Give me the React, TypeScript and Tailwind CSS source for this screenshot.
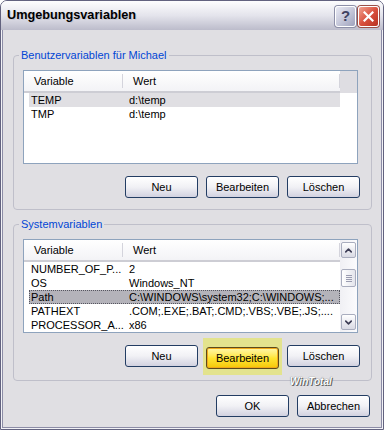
import { ChevronUp, ChevronDown } from 'lucide-react';

type Row = { name: string; value: string; selected?: boolean; focused?: boolean };

const userVars: Row[] = [
  { name: 'TEMP', value: 'd:\\temp', selected: true },
  { name: 'TMP', value: 'd:\\temp' },
];

const sysVars: Row[] = [
  { name: 'NUMBER_OF_P...', value: '2' },
  { name: 'OS', value: 'Windows_NT' },
  { name: 'Path', value: 'C:\\WINDOWS\\system32;C:\\WINDOWS;...', focused: true },
  { name: 'PATHEXT', value: '.COM;.EXE;.BAT;.CMD;.VBS;.VBE;.JS;....' },
  { name: 'PROCESSOR_A...', value: 'x86' },
];

function XpButton({ label, hot }: { label: string; hot?: boolean }) {
  if (hot) {
    return (
      <div className="relative">
        {/* yellow marker drawn over the screenshot */}
        <div className="absolute -left-[3px] -right-[3px] -top-[7px] -bottom-[6px] bg-[#e3e38e]" />
        <button className="relative w-[73px] h-[22px] rounded-[3px] border border-[#5b4a1c] bg-gradient-to-b from-[#fff7a8] via-[#ffe531] to-[#f5c800] shadow-[inset_0_0_0_1px_#f0a81c] text-[11px] text-black">
          {label}
        </button>
      </div>
    );
  }
  return (
    <button className="w-[73px] h-[22px] rounded-[3px] border border-[#233d63] bg-gradient-to-b from-white via-[#f1f1f5] to-[#d2d2e0] text-[11px] text-black">
      {label}
    </button>
  );
}

function ListHeader() {
  return (
    <div className="flex h-[22px] bg-gradient-to-b from-white to-[#f3f3f6] border-b-2 border-[#cdcdd4] text-[11px]">
      <div className="w-[99px] flex items-center pl-[10px] border-r border-[#d4d4dc] my-[3px]">Variable</div>
      <div className="flex-1 flex items-center pl-[10px] border-r border-[#d4d4dc] my-[3px]">Wert</div>
    </div>
  );
}

function ListRows({ rows }: { rows: Row[] }) {
  return (
    <div className="flex flex-col">
      {rows.map((r) => (
        <div
          key={r.name}
          className={`ml-[5px] w-[311px] h-[14px] flex items-center text-[11px] leading-[13px] whitespace-nowrap overflow-hidden ${
            r.selected ? 'bg-[#e0dfe3]' : ''
          } ${r.focused ? 'bg-[#b4b3ba] outline outline-1 outline-dotted outline-[#55555f] -outline-offset-1' : ''}`}
        >
          <div className="w-[98px] pl-[2px] shrink-0">{r.name}</div>
          <div className="pl-[2px]">{r.value}</div>
        </div>
      ))}
    </div>
  );
}

function ScrollBar() {
  return (
    <div className="w-[17px] shrink-0 flex flex-col px-[1px] py-[2px] bg-gradient-to-r from-[#f0f0f4] to-[#fbfbfd]">
      <div className="h-[16px] rounded-[2px] border border-[#a9adbe] bg-gradient-to-b from-white to-[#d9dae4] flex items-center justify-center">
        <ChevronUp className="w-[11px] h-[11px] text-[#3d3d55]" strokeWidth={3.5} />
      </div>
      <div className="h-[11px]" />
      <div className="h-[18px] rounded-[2px] border border-[#a9adbe] bg-gradient-to-r from-white to-[#e4e5ec] flex flex-col items-center justify-center gap-[1px]">
        <div className="w-[6px] h-px bg-[#9a9cb0]" />
        <div className="w-[6px] h-px bg-[#9a9cb0]" />
        <div className="w-[6px] h-px bg-[#9a9cb0]" />
        <div className="w-[6px] h-px bg-[#9a9cb0]" />
      </div>
      <div className="flex-1" />
      <div className="h-[16px] rounded-[2px] border border-[#a9adbe] bg-gradient-to-b from-white to-[#d9dae4] flex items-center justify-center">
        <ChevronDown className="w-[11px] h-[11px] text-[#3d3d55]" strokeWidth={3.5} />
      </div>
    </div>
  );
}

function GroupBox({
  title,
  rows,
  scroll,
  hot,
}: {
  title: string;
  rows: Row[];
  scroll?: boolean;
  hot?: boolean;
}) {
  return (
    <fieldset className="mx-0 border border-[#bfbfca] rounded-[4px] pl-[9px] pr-[11px] pt-[8px] pb-[11px]">
      <legend className="-ml-[4px] px-[2px] text-[11px] leading-[13px] text-[#0046d5]">{title}</legend>
      <div className="w-[335px] h-[94px] border border-[#8ea3bd] bg-white flex overflow-hidden">
        {scroll ? (
          <>
            <div className="flex-1 flex flex-col">
              <ListHeader />
              <ListRows rows={rows} />
            </div>
            <ScrollBar />
          </>
        ) : (
          <div className="flex-1 flex flex-col">
            <div className="flex">
              <div className="flex-1">
                <ListHeader />
              </div>
              <div className="w-[17px] h-[22px] bg-[#dedde2]" />
            </div>
            <ListRows rows={rows} />
          </div>
        )}
      </div>
      <div className="flex justify-end gap-[8px] mt-[12px]">
        <XpButton label="Neu" />
        <XpButton label="Bearbeiten" hot={hot} />
        <XpButton label="Löschen" />
      </div>
    </fieldset>
  );
}

export default function App() {
  return (
    <div className="w-[384px] h-[430px] font-['Liberation_Sans',Arial,sans-serif] text-black">
      <div className="w-full h-full flex flex-col rounded-t-[7px] border border-[#62627f] bg-[#f2f2f6] overflow-hidden">
        {/* Title bar */}
        <div className="h-[29px] shrink-0 flex items-center justify-between pl-[6px] pr-[4px] bg-gradient-to-b from-[#fdfdfe] via-[#e4e4ec] to-[#bcbccb]">
          <span className="text-[12.7px] font-bold [text-shadow:1px_1px_0_#c8c8d4]">Umgebungsvariablen</span>
          <div className="flex gap-[2px] mt-[1px]">
            <div className="w-[21px] h-[21px] rounded-[3px] border border-white bg-gradient-to-br from-[#e9eaf4] via-[#c6c8da] to-[#9fa2bd] shadow-[0_0_0_1px_#8d8fa8] flex items-center justify-center text-[15px] font-bold text-[#3f4260]">
              ?
            </div>
            <div className="w-[21px] h-[21px] rounded-[3px] border border-white bg-gradient-to-br from-[#f0a292] via-[#d9513f] to-[#b8301f] shadow-[0_0_0_1px_#9a5048] flex items-center justify-center">
              <svg width="11" height="11" viewBox="0 0 11 11">
                <path d="M1.5 1.5 L9.5 9.5 M9.5 1.5 L1.5 9.5" stroke="white" strokeWidth="2.2" strokeLinecap="square" />
              </svg>
            </div>
          </div>
        </div>

        {/* Client area */}
        <div className="flex-1 flex flex-col px-[1px] pb-[1px]">
          <div className="relative flex-1 flex flex-col bg-[#e0dfe3] border-x border-b border-[#8c8ca6] pl-[10px] pr-[9px] pt-[19px]">
            <GroupBox title="Benutzervariablen für Michael" rows={userVars} />
            <div className="h-[8px]" />
            <GroupBox title="Systemvariablen" rows={sysVars} scroll hot />

            <div className="flex justify-end gap-[8px] mt-[14px] pr-[2px]">
              <XpButton label="OK" />
              <XpButton label="Abbrechen" />
            </div>

            <span className="absolute left-[287px] top-[344px] text-[10px] font-bold italic text-white [text-shadow:0_0_1px_#444,1px_1px_0_#666]">
              WinTotal
            </span>
          </div>
        </div>
      </div>
    </div>
  );
}
